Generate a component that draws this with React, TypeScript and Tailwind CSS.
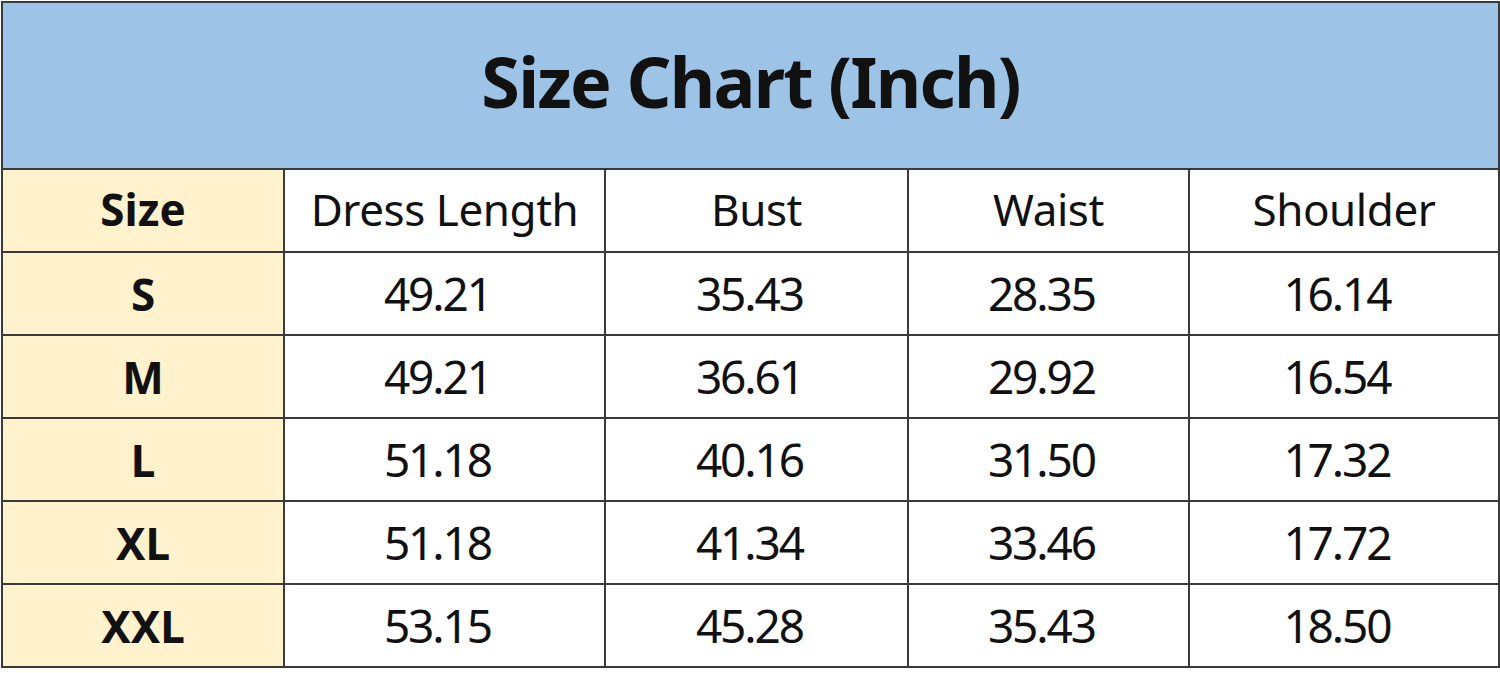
const headers = ['Dress Length', 'Bust', 'Waist', 'Shoulder']

const rows = [
  { size: 'S', values: ['49.21', '35.43', '28.35', '16.14'] },
  { size: 'M', values: ['49.21', '36.61', '29.92', '16.54'] },
  { size: 'L', values: ['51.18', '40.16', '31.50', '17.32'] },
  { size: 'XL', values: ['51.18', '41.34', '33.46', '17.72'] },
  { size: 'XXL', values: ['53.15', '45.28', '35.43', '18.50'] },
]

const cell = 'border-2 border-[#3a3a3a] text-center align-middle p-0'

export default function App() {
  return (
    <div className="w-[1500px] h-[673px] bg-white pt-[1px] pl-[1px] font-['Noto_Sans',sans-serif] text-[#111]">
      <table className="w-[1497px] border-collapse table-fixed">
        <colgroup>
          <col className="w-[282px]" />
          <col className="w-[321px]" />
          <col className="w-[303px]" />
          <col className="w-[281px]" />
          <col className="w-[310px]" />
        </colgroup>
        <thead>
          <tr className="h-[167px]">
            <th colSpan={5} className={`${cell} bg-[#9dc3e6] text-[70px] font-bold tracking-[-0.025em] leading-none pb-[10px]`}>
              Size Chart (Inch)
            </th>
          </tr>
          <tr className="h-[83px]">
            <th className={`${cell} bg-[#fff2cc] text-[44px] font-bold pb-[4px]`}>Size</th>
            {headers.map((h) => (
              <th key={h} className={`${cell} text-[44px] font-normal tracking-[-0.01em] pb-[4px]`}>
                {h}
              </th>
            ))}
          </tr>
        </thead>
        <tbody>
          {rows.map((r) => (
            <tr key={r.size} className="h-[83px]">
              <td className={`${cell} bg-[#fff2cc] text-[44px] font-bold`}>{r.size}</td>
              {r.values.map((v, i) => (
                <td key={i} className={`${cell} text-[46px] tracking-[-0.045em] pr-[14px]`}>
                  {v}
                </td>
              ))}
            </tr>
          ))}
        </tbody>
      </table>
    </div>
  )
}
